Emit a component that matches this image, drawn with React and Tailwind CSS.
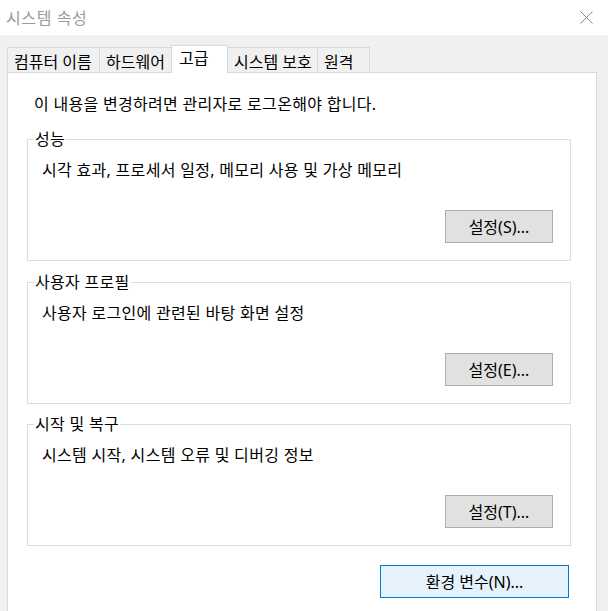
import React from "react";

const FONT = "font-['Noto_Sans','Noto_Sans_CJK_KR',sans-serif]";
const TXT = "text-[16px] leading-[20px] tracking-[0.3px] text-black";
const BTN_TXT = "text-[16px] leading-[20px] text-black";

const TABS = [
  { label: "컴퓨터 이름", w: "w-[93px]" },
  { label: "하드웨어", w: "w-[73px]" },
  { label: "고급", w: "w-[57px]", active: true },
  { label: "시스템 보호", w: "w-[91px]" },
  { label: "원격", w: "w-[53px]" },
];

function Tab({ label, w, active, first }) {
  if (active) {
    return (
      <div
        className={`${w} h-[28px] -mb-px ${first ? "" : "-ml-px"} relative z-10 bg-white border border-b-0 border-[#d9d9d9] pl-[7px] pt-[2px] ${BTN_TXT}`}
      >
        {label}
      </div>
    );
  }
  return (
    <div
      className={`${w} h-[25px] ${first ? "" : "-ml-px"} bg-[#f0f0f0] border border-b-0 border-[#d9d9d9] pl-[6px] pt-[4px] whitespace-nowrap ${BTN_TXT}`}
    >
      {label}
    </div>
  );
}

function WinButton({ children, className = "" }) {
  return (
    <button
      type="button"
      className={`w-[108px] h-[33px] bg-[#e1e1e1] border border-[#adadad] flex items-center justify-center ${BTN_TXT} ${className}`}
    >
      {children}
    </button>
  );
}

function Group({ title, text, button, className = "" }) {
  return (
    <div
      className={`relative h-[122px] border border-[#dcdcdc] flex flex-col ${className}`}
    >
      <span className={`absolute left-[6px] top-[-11px] bg-white px-[1px] ${TXT}`}>
        {title}
      </span>
      <div className={`mt-[20px] pl-[14px] ${TXT}`}>{text}</div>
      <WinButton className="mt-auto self-end mr-[17px] mb-[17px]">
        {button}
      </WinButton>
    </div>
  );
}

export default function App() {
  return (
    <div
      className={`${FONT} w-[608px] h-[611px] bg-[#f0f0f0] overflow-hidden select-none`}
    >
      {/* title bar */}
      <div className="h-[35px] bg-white flex items-center justify-between pl-[6px] pr-[15px]">
        <span className="text-[16px] leading-[20px] tracking-[0.6px] text-[#9a9a9a]">
          시스템 속성
        </span>
        <svg width="13" height="13" viewBox="0 0 13 13" className="text-[#8a8a8a]">
          <path
            d="M0.5 0.5 L12.5 12.5 M12.5 0.5 L0.5 12.5"
            stroke="currentColor"
            strokeWidth="1"
            fill="none"
          />
        </svg>
      </div>

      {/* tabs */}
      <div className="pt-[10px] pl-[7px] flex items-end">
        {TABS.map((t, i) => (
          <Tab key={t.label} {...t} first={i === 0} />
        ))}
      </div>

      {/* panel */}
      <div className="ml-[7px] w-[590px] h-[560px] bg-white border border-[#d9d9d9] flex flex-col">
        <div className={`pt-[21px] pl-[26px] ${TXT}`}>
          이 내용을 변경하려면 관리자로 로그온해야 합니다.
        </div>

        <div className="ml-[19px] w-[544px] mt-[25px] flex flex-col">
          <Group
            title="성능"
            text="시각 효과, 프로세서 일정, 메모리 사용 및 가상 메모리"
            button="설정(S)..."
          />
          <Group
            className="mt-[21px]"
            title="사용자 프로필"
            text="사용자 로그인에 관련된 바탕 화면 설정"
            button="설정(E)..."
          />
          <Group
            className="mt-[20px]"
            title="시작 및 복구"
            text="시스템 시작, 시스템 오류 및 디버깅 정보"
            button="설정(T)..."
          />
        </div>

        <div className="flex justify-end pr-[27px] mt-[19px]">
          <button
            type="button"
            className={`w-[189px] h-[33px] bg-[#e5f1fb] border border-[#0078d7] flex items-center justify-center ${BTN_TXT}`}
          >
            환경 변수(N)...
          </button>
        </div>
      </div>
    </div>
  );
}
